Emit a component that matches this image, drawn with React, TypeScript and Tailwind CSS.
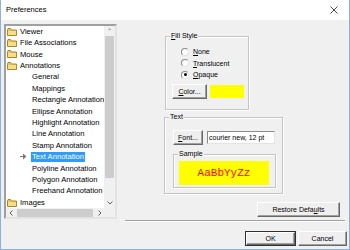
import React from "react";

const ui = { fontFamily: '"Liberation Sans", Arial, sans-serif' };

function Folder() {
  return (
    <svg width="10" height="8" viewBox="0 0 10 8" className="shrink-0">
      <path d="M0.5 1.5 L0.5 7.5 L9.5 7.5 L9.5 2 L4.5 2 L3.5 0.5 L1 0.5 Z" fill="#e8c25a" stroke="#a98a2e" strokeWidth="1" />
      <rect x="1" y="3" width="8" height="4" fill="#f8dc86" />
    </svg>
  );
}

function Pin() {
  return (
    <svg width="7" height="7" viewBox="0 0 7 7" className="shrink-0">
      <path d="M0 3 L3 3 L3 0.5 L6.5 3.5 L3 6.5 L3 4 L0 4 Z" fill="#7a7a7a" />
    </svg>
  );
}

function Btn({ children, w, def }: { children: React.ReactNode; w: string; def?: boolean }) {
  return (
    <div className={`${w} h-[15px] ${def ? "border border-[#303030]" : ""} flex`}>
      <div className="flex-1 flex items-center justify-center bg-[#efefef] border border-t-white border-l-white border-r-[#696969] border-b-[#696969] shadow-[inset_-1px_-1px_0_#a0a0a0] text-[7px] text-black leading-none">
        {children}
      </div>
    </div>
  );
}

function Radio({ label, on }: { label: React.ReactNode; on?: boolean }) {
  return (
    <div className="h-[11.5px] flex items-center gap-[4px]">
      <span className="w-[8px] h-[8px] rounded-full bg-white border border-t-[#8a8a8a] border-l-[#8a8a8a] border-r-[#e4e4e4] border-b-[#e4e4e4] flex items-center justify-center">
        {on && <span className="w-[3px] h-[3px] rounded-full bg-black" />}
      </span>
      <span className="text-[7px] leading-none">{label}</span>
    </div>
  );
}

function Group({ title, className, children }: { title: React.ReactNode; className: string; children: React.ReactNode }) {
  return (
    <div className={`relative border border-[#c4c4c4] shadow-[inset_1px_1px_0_white,1px_1px_0_white] ${className}`}>
      <span className="absolute left-[4px] top-[-5px] px-[1px] bg-[#f0f0f0] text-[7px] leading-none">{title}</span>
      {children}
    </div>
  );
}

const tree: { t: string; lvl: number; sel?: boolean }[] = [
  { t: "Viewer", lvl: 0 },
  { t: "File Associations", lvl: 0 },
  { t: "Mouse", lvl: 0 },
  { t: "Annotations", lvl: 0 },
  { t: "General", lvl: 1 },
  { t: "Mappings", lvl: 1 },
  { t: "Rectangle Annotation", lvl: 1 },
  { t: "Ellipse Annotation", lvl: 1 },
  { t: "Highlight Annotation", lvl: 1 },
  { t: "Line Annotation", lvl: 1 },
  { t: "Stamp Annotation", lvl: 1 },
  { t: "Text Annotation", lvl: 1, sel: true },
  { t: "Polyline Annotation", lvl: 1 },
  { t: "Polygon Annotation", lvl: 1 },
  { t: "Freehand Annotation", lvl: 1 },
  { t: "Images", lvl: 0 },
];

export default function App() {
  return (
    <div style={ui} className="w-[350px] h-[250px] overflow-hidden flex flex-col border-x border-b border-[#8fb0dc] bg-[#f0f0f0] text-black">
      <div className="h-[20px] shrink-0 bg-white flex items-center justify-between pl-[5px] pr-[11px]">
        <span className="text-[7.5px] leading-none">Preferences</span>
        <svg width="8" height="8" viewBox="0 0 8 8">
          <path d="M0.5 0.5 L7.5 7.5 M7.5 0.5 L0.5 7.5" stroke="#333" strokeWidth="0.9" />
        </svg>
      </div>

      <div className="flex">
        {/* tree view */}
        <div className="ml-[3px] mt-[4px] w-[113px] h-[195px] border-2 border-t-[#a0a0a0] border-l-[#a0a0a0] border-r-[#e3e3e3] border-b-[#e3e3e3] flex flex-col bg-white">
          <div className="flex h-[182px]">
            <div className="flex-1 overflow-hidden">
              {tree.map((r) => (
                <div key={r.t} className="h-[11.4px] flex items-center whitespace-nowrap">
                  {r.lvl === 0 ? (
                    <div className="flex items-center gap-[3px] pl-[1px]">
                      <Folder />
                      <span className="text-[7.6px] leading-none">{r.t}</span>
                    </div>
                  ) : (
                    <div className="flex items-center pl-[14px]">
                      <span className="w-[11px] flex">{r.sel && <Pin />}</span>
                      <span
                        className={`text-[7.6px] leading-none px-[1px] py-[1.5px] ${
                          r.sel ? "bg-[#3399ff] text-white" : ""
                        }`}
                      >
                        {r.t}
                      </span>
                    </div>
                  )}
                </div>
              ))}
            </div>
            <div className="w-[11px] bg-[#f0f0f0] flex flex-col items-center">
              <span className="h-[10px] text-[6px] leading-[10px] text-[#606060]">⌃</span>
              <div className="w-[9px] h-[142px] bg-[#cdcdcd]" />
              <div className="flex-1" />
              <svg width="6" height="4" viewBox="0 0 6 4" className="mb-[3px]">
                <path d="M0.5 0.5 L3 3 L5.5 0.5" stroke="#606060" fill="none" strokeWidth="1" />
              </svg>
            </div>
          </div>
          <div className="flex flex-1 bg-[#f0f0f0]">
            <div className="flex-1 flex items-center">
              <svg width="4" height="6" viewBox="0 0 4 6" className="ml-[3px]">
                <path d="M3.5 0.5 L1 3 L3.5 5.5" stroke="#606060" fill="none" strokeWidth="1" />
              </svg>
              <div className="ml-[4px] w-[76px] h-[8px] bg-[#cdcdcd]" />
              <svg width="4" height="6" viewBox="0 0 4 6" className="ml-[5px]">
                <path d="M0.5 0.5 L3 3 L0.5 5.5" stroke="#606060" fill="none" strokeWidth="1" />
              </svg>
            </div>
            <div className="w-[11px]" />
          </div>
        </div>

        {/* right side */}
        <div className="flex-1 flex flex-col">
          <Group title={<><u>F</u>ill Style</>} className="ml-[48px] mt-[16px] w-[84px] h-[74px]">
            <div className="pl-[15px] pt-[9px] flex flex-col">
              <Radio label={<><u>N</u>one</>} />
              <Radio label={<><u>T</u>ranslucent</>} />
              <Radio label={<><u>O</u>paque</>} on />
            </div>
            <div className="flex items-center gap-[3px] ml-[6px] mt-[3px]">
              <Btn w="w-[35px]"><u>C</u>olor...</Btn>
              <div className="w-[34px] h-[13px] bg-[#ffff00]" />
            </div>
          </Group>

          <Group title="Text" className="ml-[47px] mt-[7px] w-[119px] h-[77px]">
            <div className="flex items-center gap-[4px] ml-[8px] mt-[12px]">
              <Btn w="w-[30px]"><u>F</u>ont...</Btn>
              <div className="w-[68px] h-[13px] bg-white border border-t-[#8a8a8a] border-l-[#8a8a8a] border-r-[#e4e4e4] border-b-[#e4e4e4] flex items-center pl-[1px] text-[7px] leading-none whitespace-nowrap overflow-hidden">
                courier new, 12 pt
              </div>
            </div>
            <Group title="Sample" className="ml-[8px] mt-[9px] w-[103px] h-[34px]">
              <div className="ml-[5px] mt-[6px] w-[90px] h-[24px] bg-[#ffff00] flex items-center justify-center">
                <span style={{ fontFamily: '"Liberation Mono", "Courier New", monospace' }} className="text-[11px] leading-none text-[#ff0000]">
                  AaBbYyZz
                </span>
              </div>
            </Group>
          </Group>

          <div className="ml-[140px] mt-[8px]">
            <Btn w="w-[83px]">Restore Defa<u>u</u>lts</Btn>
          </div>
          <div className="ml-[8px] mt-[3px] w-[220px] h-[2px] border-t border-t-[#a0a0a0] border-b border-b-white" />
        </div>
      </div>

      <div className="flex justify-end gap-[2px] pr-[2px] mt-[9px]">
        <Btn w="w-[51px]" def>OK</Btn>
        <Btn w="w-[49px]">Cancel</Btn>
      </div>
    </div>
  );
}
